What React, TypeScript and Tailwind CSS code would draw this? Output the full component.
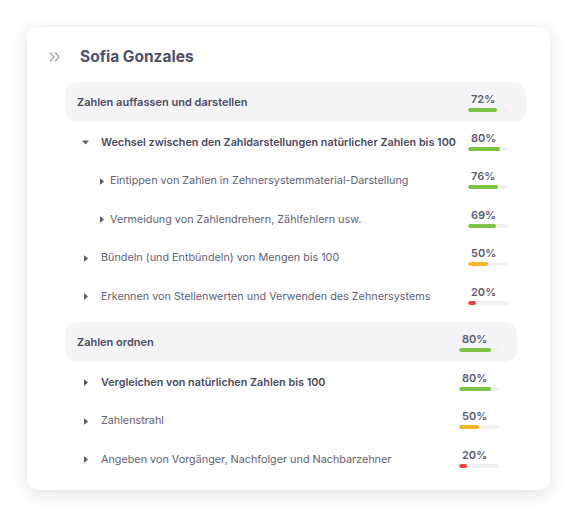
import React from 'react';

type Row = { label: string; pct: number; level: 1 | 2; open?: boolean; bold?: boolean };

type Section = { title: string; pct: number; rows: Row[]; narrow?: boolean };

const sections: Section[] = [
    {
        title: 'Zahlen auffassen und darstellen',
        pct: 72,
        rows: [
            { label: 'Wechsel zwischen den Zahldarstellungen natürlicher Zahlen bis 100', pct: 80, level: 1, open: true, bold: true },
            { label: 'Eintippen von Zahlen in Zehnersystemmaterial-Darstellung', pct: 76, level: 2 },
            { label: 'Vermeidung von Zahlendrehern, Zählfehlern usw.', pct: 69, level: 2 },
            { label: 'Bündeln (und Entbündeln) von Mengen bis 100', pct: 50, level: 1 },
            { label: 'Erkennen von Stellenwerten und Verwenden des Zehnersystems', pct: 20, level: 1 },
        ],
    },
    {
        title: 'Zahlen ordnen',
        pct: 80,
        narrow: true,
        rows: [
            { label: 'Vergleichen von natürlichen Zahlen bis 100', pct: 80, level: 1, bold: true },
            { label: 'Zahlenstrahl', pct: 50, level: 1 },
            { label: 'Angeben von Vorgänger, Nachfolger und Nachbarzehner', pct: 20, level: 1 },
        ],
    },
];

function barColor(pct: number) {
    if (pct >= 60) return 'bg-[#7dc243]';
    if (pct >= 40) return 'bg-[#f8b422]';
    return 'bg-[#ec4444]';
}

function Score({ pct }: { pct: number }) {
    return (
        <div className="w-[40px] flex flex-col gap-[2px] shrink-0">
            <span className="pl-[3px] text-[11px] leading-[13px] font-semibold text-[#5b5b6d]">{pct}%</span>
            <div className="h-[4px] w-full rounded-full bg-[#f0f0f3] overflow-hidden">
                <div className={`h-full rounded-full ${barColor(pct)}`} style={{ width: `${pct}%` }} />
            </div>
        </div>
    );
}

function Caret({ open }: { open?: boolean }) {
    if (open) {
        return (
            <svg width="7" height="5" viewBox="0 0 7 5" className="shrink-0">
                <path d="M0 0.5 L7 0.5 L3.5 4.5 Z" fill="#5b5b6d" />
            </svg>
        );
    }
    return (
        <svg width="4" height="7" viewBox="0 0 4 7" className="shrink-0">
            <path d="M0 0 L4 3.5 L0 7 Z" fill="#5b5b6d" />
        </svg>
    );
}

export default function App() {
    return (
        <div className="min-h-screen bg-white p-[27px]" style={{ fontFamily: 'Inter, "Noto Sans", sans-serif' }}>
            <div className="w-[523px] h-[463px] rounded-[10px] bg-white shadow-[0_3px_18px_rgba(0,0,0,0.13)] pt-[18px]">
                {/* header */}
                <div className="flex items-center h-[24px] pl-[22px]">
                    <svg width="12" height="10" viewBox="0 0 12 10" fill="none" stroke="#a3a3b3" strokeWidth="1.3" strokeLinecap="round" strokeLinejoin="round">
                        <path d="M1.5 1 L5 5 L1.5 9" />
                        <path d="M6.5 1 L10 5 L6.5 9" />
                    </svg>
                    <h1 className="ml-[19px] text-[15.5px] font-bold text-[#50506a]">Sofia Gonzales</h1>
                </div>

                <div className="mt-[13px] pl-[38px]">
                    {sections.map((s, i) => (
                        <div key={s.title} className={i > 0 ? 'mt-[7.5px]' : ''}>
                            <div className={`h-[40px] rounded-[12px] bg-[#f4f4f6] flex items-center justify-between pl-[12px] pr-[18px] ${s.narrow ? 'mr-[33px]' : 'mr-[24px]'}`}>
                                <span className="text-[11px] font-semibold text-[#4b4b5e]">{s.title}</span>
                                <Score pct={s.pct} />
                            </div>
                            {s.rows.map((r) => (
                                <div key={r.label} className={`h-[38.5px] flex items-center justify-between pr-[18px] ${s.narrow ? 'mr-[33px]' : 'mr-[24px]'}`}>
                                    <div className={`flex items-center pt-[3px] ${r.level === 2 ? 'pl-[33px]' : 'pl-[17px]'}`}>
                                        <div className="w-[7px] flex justify-center">
                                            <Caret open={r.open} />
                                        </div>
                                        <span
                                            className={`text-[10.8px] ${r.level === 2 ? 'ml-[5px]' : 'ml-[12px]'} ${r.bold ? 'font-semibold text-[#4b4b5e]' : 'text-[#616173]'}`}
                                        >
                                            {r.label}
                                        </span>
                                    </div>
                                    <Score pct={r.pct} />
                                </div>
                            ))}
                        </div>
                    ))}
                </div>
            </div>
        </div>
    );
}
